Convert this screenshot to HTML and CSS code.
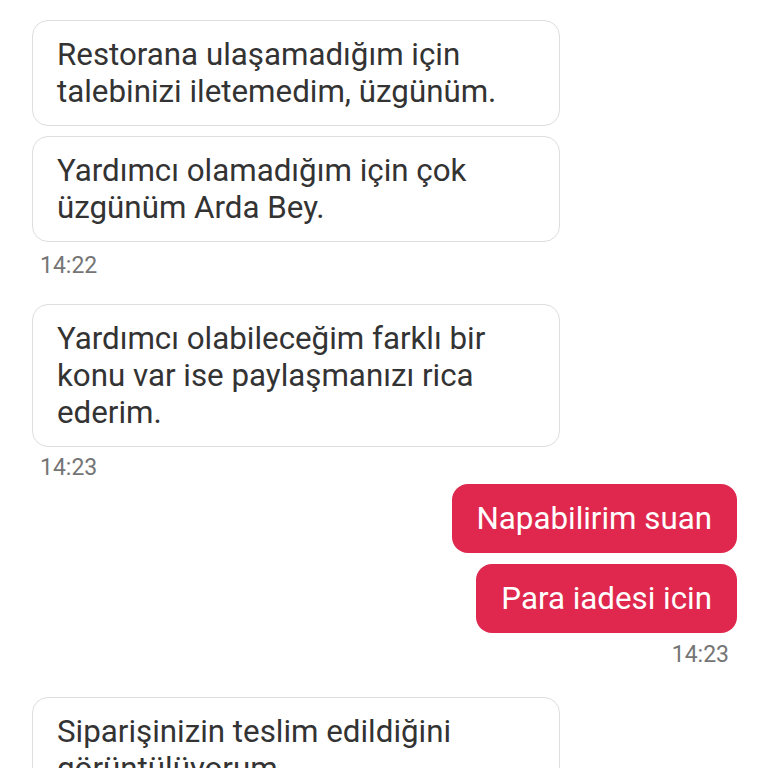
FILE: index.html
```html
<!DOCTYPE html>
<html lang="tr">
<head>
<meta charset="utf-8">
<link rel="stylesheet" href="styles.css">
</head>
<body>
<div class="chat">
  <div class="bubble in">Restorana ulaşamadığım için talebinizi iletemedim, üzgünüm.</div>
  <div class="bubble in">Yardımcı olamadığım için çok üzgünüm Arda Bey.</div>
  <div class="time">14:22</div>
  <div class="bubble in">Yardımcı olabileceğim farklı bir konu var ise paylaşmanızı rica ederim.</div>
  <div class="time t2">14:23</div>
  <div class="bubble out">Napabilirim suan</div>
  <div class="bubble out">Para iadesi icin</div>
  <div class="time right">14:23</div>
  <div class="bubble in">Siparişinizin teslim edildiğini görüntülüyorum.</div>
</div>
</body>
</html>
```
FILE: styles.css
```css
html, body {
  margin: 0;
  padding: 0;
  background: #ffffff;
  height: 768px;
  overflow: hidden;
}
.chat {
  display: flex;
  flex-direction: column;
  align-items: flex-start;
  gap: 10px;
  padding: 20px 31px 0 32px;
  font-family: Roboto, "Liberation Sans", sans-serif;
}
.bubble {
  box-sizing: border-box;
  font-size: 31.3px;
  line-height: 37px;
  border-radius: 16px;
  padding: 15px 24px;
}
.in {
  width: 528px;
  border: 1px solid #dedede;
  color: #333333;
}
.out {
  align-self: flex-end;
  background: #e0284f;
  color: #ffffff;
  padding: 16px 25px;
}
.out + .out {
  margin-top: 1px;
}
.time {
  font-size: 23px;
  line-height: 24px;
  color: #757575;
  padding: 0 8px;
  margin-top: 2px;
  margin-bottom: 16px;
}
.t2 {
  margin-top: -1px;
  margin-bottom: -6px;
}
.time.right {
  align-self: flex-end;
  margin-top: 0;
  margin-bottom: 20px;
}
```
